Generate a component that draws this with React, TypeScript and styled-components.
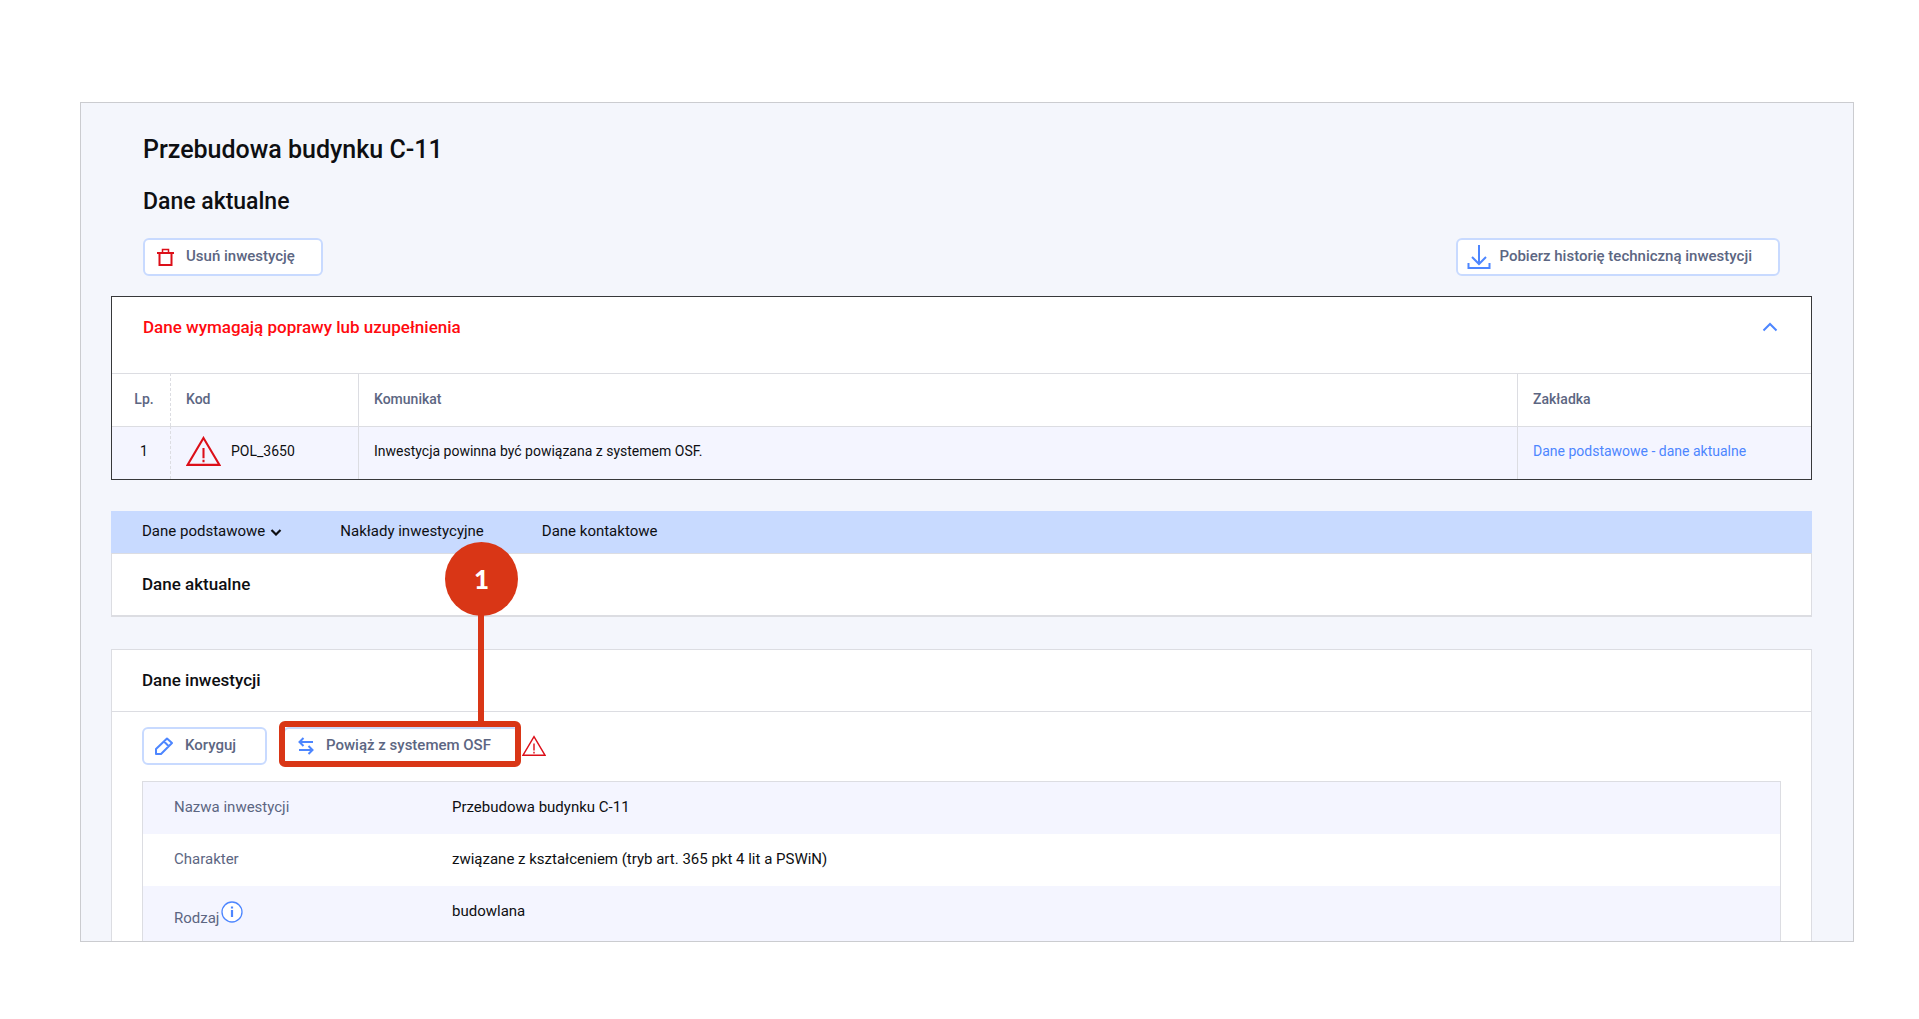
import React from "react";
import styled, { createGlobalStyle, css } from "styled-components";

const color = {
  page: "#f4f6fc",
  stripe: "#f4f5ff",
  line: "#dcdde2",
  text: "#0e0f12",
  muted: "#5c6682",
  blue: "#4d86ff",
  softBlue: "#c8daff",
  red: "#dc0f19",
  callout: "#d93616",
};

const GlobalStyle = createGlobalStyle`
  *, *::before, *::after { box-sizing: border-box; }
  body {
    margin: 0;
    background: #fff;
    color: ${color.text};
    font-family: Roboto, "Liberation Sans", sans-serif;
    font-size: 15px;
  }
  h1, h2, h3, dl, dd { margin: 0; }
  h1, h2, h3 { font-weight: 500; }
`;

const Page = styled.div`
  padding: 102px 65px 76px 80px;
`;

const Frame = styled.main`
  padding: 32px 41px 0 30px;
  border: 1px solid #cbccd0;
  background: ${color.page};
`;

const PageHeader = styled.header`
  display: flex;
  flex-direction: column;
  gap: 22px;
  padding: 0 32px;
  margin-bottom: 20px;
`;

const Title = styled.h1`
  font-size: 25px;
  line-height: 30px;
`;

const Subtitle = styled.h2`
  font-size: 23px;
  line-height: 29px;
`;

const Toolbar = styled.div<{ $spread?: boolean }>`
  display: flex;
  align-items: center;
  gap: 16px;
  justify-content: ${(p) => (p.$spread ? "space-between" : "flex-start")};
`;

const Button = styled.button`
  display: flex;
  align-items: center;
  gap: 8px;
  min-width: 125px;
  height: 38px;
  padding: 0 26px 2px 9px;
  border: 2px solid ${color.softBlue};
  border-radius: 6px;
  background: #fff;
  color: ${color.muted};
  font: 500 15px/20px Roboto, "Liberation Sans", sans-serif;
  cursor: pointer;
  svg { flex: none; margin-top: 2px; }
`;

const Alert = styled.section`
  border: 1px solid #37383a;
  background: #fff;
`;

const AlertHeader = styled.div`
  display: flex;
  justify-content: space-between;
  height: 76px;
  padding: 18px 33px 18px 31px;
`;

const AlertTitle = styled.h2`
  color: #ff0a0f;
  font-size: 17px;
  line-height: 24px;
`;

const Toggle = styled.button`
  display: flex;
  align-items: center;
  height: 24px;
  padding: 0;
  border: 0;
  background: none;
  cursor: pointer;
`;

const Messages = styled.table`
  width: 100%;
  border-collapse: separate;
  border-spacing: 0;
  table-layout: fixed;
  font-size: 14px;
  line-height: 20px;
  tbody tr { background: ${color.stripe}; }
`;

const cell = css<{ $dashed?: boolean; $center?: boolean }>`
  height: 53px;
  padding: 0 15px 2px;
  border-top: 1px solid ${color.line};
  text-align: left;
  &:not(:first-child) { border-left: 1px ${(p) => (p.$dashed ? "dashed" : "solid")} ${color.line}; }
  ${(p) => p.$center && "padding-left: 21px; text-align: center;"}
`;

const HeadCell = styled.th<{ $dashed?: boolean; $center?: boolean }>`
  ${cell}
  color: ${color.muted};
  font-weight: 500;
`;

const Cell = styled.td<{ $dashed?: boolean; $center?: boolean }>`
  ${cell}
  padding-bottom: 4px;
`;

const CodeValue = styled.div`
  display: flex;
  align-items: center;
  gap: 10px;
`;

const TextLink = styled.a`
  color: ${color.blue};
  text-decoration: none;
`;

const Tabs = styled.nav`
  display: flex;
  align-items: center;
  gap: 58px;
  height: 42px;
  margin-top: 31px;
  padding: 0 31px 2px;
  background: ${color.softBlue};
`;

const Tab = styled.a`
  display: flex;
  align-items: center;
  gap: 5px;
  color: ${color.text};
  line-height: 20px;
  text-decoration: none;
`;

const Panel = styled.section<{ $open?: boolean }>`
  border: 1px solid ${color.line};
  border-bottom-width: ${(p) => (p.$open ? "0" : "2px")};
  background: #fff;
`;

const PanelTitle = styled.h3`
  padding: 18px 30px 19px;
  font-size: 17px;
  line-height: 24px;
`;

const PanelBody = styled.div`
  display: flex;
  flex-direction: column;
  gap: 16px;
  padding: 15px 30px 0;
  border-top: 1px solid ${color.line};
`;

const PanelGap = styled.div`
  height: 32px;
`;

const Highlighted = styled.div`
  position: relative;
  display: flex;
  margin-right: -13px;
`;

const Ring = styled.span`
  position: absolute;
  inset: -6px -2px -2px -4px;
  border: 6px solid ${color.callout};
  border-radius: 6px;
  pointer-events: none;
`;

const Stem = styled.span`
  position: absolute;
  bottom: 100%;
  left: 195px;
  width: 6px;
  height: 116px;
  background: ${color.callout};
`;

const Badge = styled.span`
  position: absolute;
  bottom: 149px;
  left: 162px;
  display: flex;
  align-items: center;
  justify-content: center;
  width: 73px;
  height: 74px;
  border-radius: 50%;
  background: ${color.callout};
  color: #fff;
  font: 900 26px/30px Lato, "Open Sans", sans-serif;
`;

const Details = styled.dl`
  border: 1px solid ${color.line};
  border-bottom: 0;
  line-height: 20px;
`;

const Detail = styled.div`
  display: grid;
  grid-template-columns: 278px 1fr;
  align-items: start;
  padding: 15px 31px 17px;
  &:nth-child(odd) { background: ${color.stripe}; }
  &:last-child { padding-bottom: 13px; }
`;

const Label = styled.dt`
  display: flex;
  align-items: flex-end;
  gap: 2px;
  color: ${color.muted};
`;

const InfoButton = styled.button`
  display: flex;
  align-items: flex-start;
  height: 27px;
  padding: 0;
  border: 0;
  background: none;
  cursor: pointer;
`;

const TrashIcon = () => (
  <svg width="24" height="20" viewBox="0 0 24 20" fill="none" stroke={color.red} strokeWidth="2" aria-hidden="true">
    <path d="M3 6h17M5.500 6v12h12V6" />
    <path d="M8.500 6V2.500h6V6" strokeWidth="1.500" />
  </svg>
);

const DownloadIcon = () => (
  <svg width="24" height="26" viewBox="0 0 24 26" fill="none" stroke={color.blue} strokeWidth="2" aria-hidden="true">
    <path d="M12 1v19M5 13l7 7 7-7" />
    <path d="M1.500 19v5h21v-5" />
  </svg>
);

const PencilIcon = () => (
  <svg width="24" height="20" viewBox="-2 0 24 20" fill="none" stroke={color.blue} strokeWidth="2" strokeLinejoin="round" aria-hidden="true">
    <path d="M1 18v-5L12 2.500 17 7 6 18zM9 5.500l4.500 4.500" />
  </svg>
);

const SwapIcon = () => (
  <svg width="24" height="20" viewBox="-2 0 24 20" fill="none" stroke={color.blue} strokeWidth="2" aria-hidden="true">
    <path d="M17 6H4M7.500 2 3.500 6l4 4M3 14h13M12.500 10l4 4-4 4" />
  </svg>
);

const WarningIcon = ({ width, height }: { width: number; height: number }) => (
  <svg width={width} height={height} viewBox="0 0 34 30" fill="none" stroke={color.red} strokeWidth="2" role="img" aria-label="Błąd">
    <path d="M17 1.800 32.500 28h-31z" />
    <path d="M17 11.500v10M17 23v2.500" />
  </svg>
);

const ChevronUp = () => (
  <svg width="16" height="10" viewBox="0 0 16 10" fill="none" stroke={color.blue} strokeWidth="2" aria-hidden="true">
    <path d="M1.500 8.500 8 2l6.500 6.500" />
  </svg>
);

const ChevronDown = () => (
  <svg width="12" height="10" viewBox="0 0 12 10" fill="none" stroke={color.text} strokeWidth="2.200" aria-hidden="true">
    <path d="M1.500 4 6 8.500 10.500 4" />
  </svg>
);

const InfoIcon = () => (
  <svg width="22" height="22" viewBox="0 0 22 22" fill="none" stroke={color.blue} aria-hidden="true">
    <circle cx="11" cy="11" r="10" strokeWidth="1.300" fill="#fff" />
    <path d="M11 9v7M11 5.500v2" strokeWidth="2.200" />
  </svg>
);

export default function App() {
  return (
    <>
      <GlobalStyle />
      <Page>
        <Frame>
          <PageHeader>
            <Title>Przebudowa budynku C-11</Title>
            <Subtitle>Dane aktualne</Subtitle>
            <Toolbar $spread>
              <Button type="button"><TrashIcon />Usuń inwestycję</Button>
              <Button type="button"><DownloadIcon />Pobierz historię techniczną inwestycji</Button>
            </Toolbar>
          </PageHeader>

          <Alert>
            <AlertHeader>
              <AlertTitle>Dane wymagają poprawy lub uzupełnienia</AlertTitle>
              <Toggle type="button" aria-label="Zwiń" aria-expanded="true"><ChevronUp /></Toggle>
            </AlertHeader>
            <Messages>
              <colgroup>
                <col style={{ width: 58 }} />
                <col style={{ width: 188 }} />
                <col />
                <col style={{ width: 294 }} />
              </colgroup>
              <thead>
                <tr>
                  <HeadCell $center>Lp.</HeadCell>
                  <HeadCell $dashed>Kod</HeadCell>
                  <HeadCell>Komunikat</HeadCell>
                  <HeadCell>Zakładka</HeadCell>
                </tr>
              </thead>
              <tbody>
                <tr>
                  <Cell $center>1</Cell>
                  <Cell $dashed><CodeValue><WarningIcon width={35} height={31} />POL_3650</CodeValue></Cell>
                  <Cell>Inwestycja powinna być powiązana z systemem OSF.</Cell>
                  <Cell><TextLink href="#dane">Dane podstawowe - dane aktualne</TextLink></Cell>
                </tr>
              </tbody>
            </Messages>
          </Alert>

          <Tabs>
            <Tab href="#dane">Dane podstawowe<ChevronDown /></Tab>
            <Tab href="#naklady">Nakłady inwestycyjne</Tab>
            <Tab href="#kontakt">Dane kontaktowe</Tab>
          </Tabs>
          <Panel id="dane">
            <PanelTitle>Dane aktualne</PanelTitle>
          </Panel>
          <PanelGap />
          <Panel $open>
            <PanelTitle>Dane inwestycji</PanelTitle>
            <PanelBody>
              <Toolbar>
                <Button type="button"><PencilIcon />Koryguj</Button>
                <Highlighted>
                  <Button type="button"><SwapIcon />Powiąż z systemem OSF</Button>
                  <Stem />
                  <Ring />
                  <Badge>1</Badge>
                </Highlighted>
                <WarningIcon width={24} height={22} />
              </Toolbar>
              <Details>
                <Detail>
                  <Label>Nazwa inwestycji</Label>
                  <dd>Przebudowa budynku C-11</dd>
                </Detail>
                <Detail>
                  <Label>Charakter</Label>
                  <dd>związane z kształceniem (tryb art. 365 pkt 4 lit a PSWiN)</dd>
                </Detail>
                <Detail>
                  <Label>
                    Rodzaj
                    <InfoButton type="button" aria-label="Informacja o rodzaju"><InfoIcon /></InfoButton>
                  </Label>
                  <dd>budowlana</dd>
                </Detail>
              </Details>
            </PanelBody>
          </Panel>
        </Frame>
      </Page>
    </>
  );
}
